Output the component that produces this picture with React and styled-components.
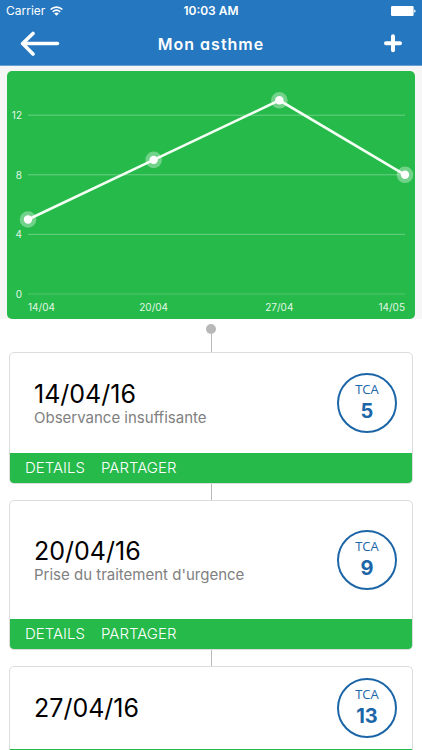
import React from 'react';
import styled, { createGlobalStyle } from 'styled-components';

const BLUE = '#2577c0';
const GREEN = '#26ba4a';
const BADGE_BLUE = '#1c66a8';

const GlobalStyle = createGlobalStyle`
  * {
    box-sizing: border-box;
  }
  body {
    margin: 0;
    background: #fff;
    color: #000;
    font-family: Inter, "Liberation Sans", sans-serif;
  }
`;

const Screen = styled.div`
  display: flex;
  flex-direction: column;
  height: 100vh;
`;

const Header = styled.header`
  flex: none;
  background: ${BLUE};
  border-bottom: 1px solid #6a9fd4;
  color: #fff;
`;

const StatusBar = styled.div`
  display: grid;
  grid-template-columns: 1fr auto 1fr;
  align-items: center;
  height: 22px;
  padding: 0 6px;
  font-size: 12px;
  line-height: 22px;
`;

const Carrier = styled.span`
  display: flex;
  align-items: center;
  gap: 5px;
`;

const Clock = styled.span`
  font-weight: 600;
`;

const Battery = styled.svg`
  justify-self: end;
`;

const NavBar = styled.nav`
  display: grid;
  grid-template-columns: 1fr auto 1fr;
  align-items: center;
  height: 43px;
  padding: 0 19px;
`;

const IconButton = styled.button`
  display: flex;
  justify-self: ${({ $side }) => $side};
  padding: 0;
  border: 0;
  background: none;
  color: inherit;
  cursor: pointer;
`;

const Title = styled.h1`
  margin: 0;
  font-size: 16px;
  font-weight: 600;
  line-height: 20px;
  letter-spacing: 1px;
  font-feature-settings: "cv11";
`;

const ChartArea = styled.section`
  flex: none;
  padding: 5px 7px 0;
  background: #f6f6f6;
`;

const ChartSvg = styled.svg`
  display: block;
  width: 100%;
  height: auto;
  border-radius: 5px;
  background: ${GREEN};

  text {
    fill: #e2f7e6;
    font-size: 10px;
  }
`;

const Timeline = styled.main`
  flex: 1;
  min-height: 0;
  overflow-y: auto;
  scrollbar-width: none;
  display: flex;
  flex-direction: column;
  align-items: center;
  padding: 5px 9px 0;
`;

const Dot = styled.span`
  flex: none;
  width: 10px;
  height: 10px;
  border-radius: 50%;
  background: #b8b8b8;
`;

const Connector = styled.span`
  flex: none;
  width: 1px;
  height: ${({ $length }) => $length}px;
  background: #b8b8b8;
`;

const Card = styled.article`
  flex: none;
  width: 100%;
  border: 1px solid #dcdcdc;
  border-radius: 5px;
  background: #fff;
  overflow: hidden;
`;

const CardBody = styled.div`
  display: flex;
  align-items: center;
  justify-content: space-between;
  padding: ${({ $space }) => $space}px 15px ${({ $space }) => $space}px 24px;
`;

const CardDate = styled.h2`
  margin: 0;
  font-size: 25px;
  font-weight: 400;
  line-height: 30px;
`;

const Note = styled.p`
  margin: 0;
  color: #808080;
  font-size: 15px;
  line-height: 18px;
`;

const Badge = styled.div`
  display: flex;
  flex-direction: column;
  align-items: center;
  justify-content: center;
  gap: 2px;
  width: 60px;
  height: 60px;
  padding-bottom: 4px;
  border: 2px solid ${BADGE_BLUE};
  border-radius: 50%;
  color: ${BADGE_BLUE};
`;

const BadgeLabel = styled.span`
  font-family: "Open Sans", "Noto Sans", sans-serif;
  font-size: 13px;
  line-height: 18px;
`;

const BadgeScore = styled.strong`
  font-size: 20px;
  font-weight: 700;
  line-height: 23px;
`;

const CardActions = styled.div`
  display: flex;
  align-items: center;
  gap: 16px;
  height: 30px;
  padding: 0 15px;
  background: ${GREEN};
`;

const ActionButton = styled.button`
  padding: 0;
  border: 0;
  background: none;
  color: #fff;
  font-family: inherit;
  font-size: 15px;
  font-weight: 300;
  line-height: 20px;
  cursor: pointer;
`;

const points = [
    { day: '14/04', score: 5 },
    { day: '20/04', score: 9 },
    { day: '27/04', score: 13 },
    { day: '14/05', score: 8 },
];

const results = [
    { date: '14/04/16', score: 5, note: 'Observance insuffisante', space: 20 },
    { date: '20/04/16', score: 9, note: "Prise du traitement d'urgence", space: 29 },
    { date: '27/04/16', score: 13, space: 11 },
];

const LEFT = 21;
const RIGHT = 398;
const BASE = 223;

const scoreY = (score) => BASE - score * 14.9;
const dayX = (index) => LEFT + (index * (RIGHT - LEFT)) / (points.length - 1);
const anchor = (index) => {
    if (index === 0) return 'start';
    return index === points.length - 1 ? 'end' : 'middle';
};

const Chart = () => (
    <ChartSvg viewBox="0 0 408 248" role="img" aria-label="Mon asthme">
        {[0, 4, 8, 12].map((tick) => (
            <g key={tick}>
                <line
                    x1={LEFT}
                    x2={RIGHT}
                    y1={scoreY(tick)}
                    y2={scoreY(tick)}
                    stroke="#fff"
                    strokeOpacity={tick === 0 ? 0.2 : 0.32}
                />
                <text x="15" y={scoreY(tick) + 4} textAnchor="end">{tick}</text>
            </g>
        ))}
        <polyline
            points={points.map(({ score }, i) => `${dayX(i)},${scoreY(score)}`).join(' ')}
            fill="none"
            stroke="#f4fff4"
            strokeWidth="2.6"
        />
        {points.map(({ day, score }, i) => (
            <g key={day}>
                <circle cx={dayX(i)} cy={scoreY(score)} r="8.3" fill="#fff" fillOpacity="0.35" />
                <circle cx={dayX(i)} cy={scoreY(score)} r="4.2" fill="#fff" />
                <text x={dayX(i)} y="240" textAnchor={anchor(i)}>{day}</text>
            </g>
        ))}
    </ChartSvg>
);

const Result = ({ date, note, score, space }) => (
    <Card>
        <CardBody $space={space}>
            <div>
                <CardDate>{date}</CardDate>
                {note && <Note>{note}</Note>}
            </div>
            <Badge>
                <BadgeLabel>TCA</BadgeLabel>
                <BadgeScore>{score}</BadgeScore>
            </Badge>
        </CardBody>
        <CardActions>
            <ActionButton type="button">DETAILS</ActionButton>
            <ActionButton type="button">PARTAGER</ActionButton>
        </CardActions>
    </Card>
);

const App = () => (
    <Screen>
        <GlobalStyle />
        <Header>
            <StatusBar>
                <Carrier>
                    Carrier
                    <svg width="13" height="10" viewBox="0 0 13 10" fill="none" stroke="#fff" strokeWidth="1.7">
                        <path d="M0.6 3.5C4 0.2 9 0.2 12.4 3.5" />
                        <path d="M2.8 5.9C5 3.9 8 3.9 10.2 5.9" />
                        <path d="M4.2 7.4C5.6 6.2 7.4 6.2 8.8 7.4L6.5 9.7Z" fill="#fff" stroke="none" />
                    </svg>
                </Carrier>
                <Clock>10:03 AM</Clock>
                <Battery width="25" height="10" viewBox="0 0 25 10" fill="#fff">
                    <rect width="22.6" height="10" rx="1.2" />
                    <path d="M23.2 3.4C25 3.6 25 6.4 23.2 6.6Z" />
                </Battery>
            </StatusBar>
            <NavBar>
                <IconButton type="button" aria-label="Retour" $side="start">
                    <svg width="42" height="26" viewBox="0 0 42 26" fill="none" stroke="#fff" strokeWidth="3.6" strokeLinecap="round" strokeLinejoin="round">
                        <path d="M38.5 12.5H4M14 2.5L3.6 12.5L14 23" />
                    </svg>
                </IconButton>
                <Title>Mon asthme</Title>
                <IconButton type="button" aria-label="Ajouter" $side="end">
                    <svg width="20" height="20" viewBox="0 0 20 20" stroke="#fff" strokeWidth="4" strokeLinecap="round">
                        <path d="M3 9.3H17M10 2.3V16.3" />
                    </svg>
                </IconButton>
            </NavBar>
        </Header>
        <ChartArea>
            <Chart />
        </ChartArea>
        <Timeline>
            <Dot />
            {results.map((result, i) => (
                <React.Fragment key={result.date}>
                    <Connector $length={i === 0 ? 18 : 16} />
                    <Result {...result} />
                </React.Fragment>
            ))}
        </Timeline>
    </Screen>
);

export default App;
